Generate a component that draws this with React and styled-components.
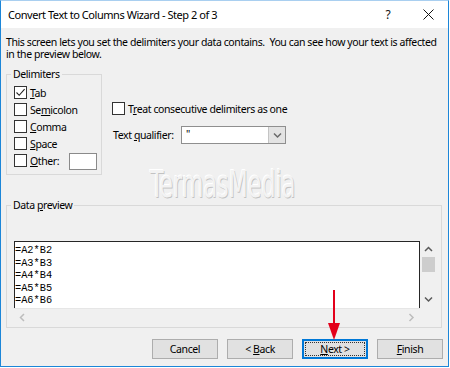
import React from 'react';
import styled, { createGlobalStyle } from 'styled-components';

const GlobalStyle = createGlobalStyle`
  html, body { margin: 0; padding: 0; background: #ffffff; }
  * { box-sizing: border-box; }
`;

const Window = styled.div`
  position: relative;
  width: 449px;
  height: 367px;
  border: 1px solid #1c86d8;
  border-top-color: #a9cff0;
  background: #f0f0f0;
  display: flex;
  flex-direction: column;
  font-family: "Noto Sans", "Open Sans", sans-serif;
  font-size: 10.5px;
  letter-spacing: -0.4px;
  color: #000;
  overflow: hidden;
`;

const TitleBar = styled.div`
  height: 27px;
  flex: none;
  background: #ffffff;
  display: flex;
  align-items: center;
  padding-left: 7px;
`;

const TitleText = styled.div`
  flex: 1;
  font-size: 11px;
  letter-spacing: -0.45px;
  color: #000;
`;

const CaptionButton = styled.div`
  width: 40px;
  height: 27px;
  display: flex;
  align-items: center;
  justify-content: center;
  font-size: 12px;
  letter-spacing: 0;
  color: #111;
`;

const Body = styled.div`
  flex: 1;
  display: flex;
  flex-direction: column;
  padding: 8px 5px 0 5px;
`;

const Description = styled.div`
  display: flex;
  flex-direction: column;
`;

const DescLine = styled.span`
  height: 12px;
  line-height: 12px;
  white-space: nowrap;
`;

const TopSection = styled.div`
  display: flex;
  gap: 10px;
  margin-top: 7px;
`;

const Group = styled.fieldset`
  margin: 0;
  padding: 0;
  min-width: 0;
  border: 1px solid #d9d9d9;
  width: ${(p) => p.$w}px;
  height: ${(p) => p.$h}px;
  margin-top: ${(p) => p.$mt || 0}px;
`;

const Legend = styled.legend`
  margin-left: 4px;
  padding: 0 2px;
  line-height: 14px;
`;

const CheckList = styled.div`
  display: flex;
  flex-direction: column;
  padding: 3px 4px 0 7px;
`;

const CheckRow = styled.div`
  height: 17px;
  display: flex;
  align-items: center;
`;

const Box = styled.span`
  width: 13px;
  height: 13px;
  flex: none;
  border: 1px solid #333;
  background: #fff;
  display: flex;
  align-items: center;
  justify-content: center;
`;

const Label = styled.span`
  margin-left: 3px;
  white-space: nowrap;
`;

const SmallInput = styled.span`
  margin-left: auto;
  width: 28px;
  height: 17px;
  margin-top: 2px;
  border: 1px solid #8a8a8a;
  background: #fff;
`;

const RightColumn = styled.div`
  display: flex;
  flex-direction: column;
  padding-top: 33px;
`;

const QualifierRow = styled.div`
  display: flex;
  align-items: center;
  margin-top: 9px;
`;

const FieldLabel = styled.span`
  width: 69px;
  padding-left: 1px;
  white-space: nowrap;
`;

const Select = styled.div`
  width: 105px;
  height: 18px;
  border: 1px solid #8f8f8f;
  background: #fff;
  display: flex;
`;

const SelectValue = styled.div`
  flex: 1;
  padding-left: 4px;
  line-height: 14px;
`;

const SelectButton = styled.div`
  width: 17px;
  background: #e3e3e3;
  border-left: 1px solid #c4c4c4;
  display: flex;
  align-items: center;
  justify-content: center;
`;

const Watermark = styled.div`
  position: absolute;
  left: 149px;
  top: 164px;
  font-family: "DejaVu Sans Condensed", "DejaVu Sans", sans-serif;
  font-size: 38px;
  line-height: 38px;
  letter-spacing: 0;
  color: #f3f3f3;
  transform: scaleX(0.65);
  transform-origin: left top;
  text-shadow: 1px 1px 0 #c2c2c2, -1px -1px 0 #ffffff;
  pointer-events: none;
`;

const PreviewInner = styled.div`
  padding: 29px 0 0 7px;
`;

const Preview = styled.div`
  width: 423px;
  height: 85px;
  display: grid;
  grid-template-columns: 406px 17px;
  grid-template-rows: 67px 17px;
`;

const DataArea = styled.div`
  background: #fff;
  border: 1px solid #262626;
  border-bottom: none;
  padding-top: 2px;
  font-family: "Liberation Mono", "Courier New", monospace;
  font-size: 10.3px;
  letter-spacing: 0;
  line-height: 12.5px;
  color: #000;
  overflow: hidden;
`;

const DataLine = styled.div`
  white-space: pre;
`;

const VScroll = styled.div`
  background: #f0f0f0;
  display: flex;
  flex-direction: column;
  align-items: center;
`;

const ArrowBox = styled.div`
  height: ${(p) => p.$h}px;
  width: 17px;
  flex: none;
  display: flex;
  align-items: center;
  justify-content: center;
`;

const Thumb = styled.div`
  width: 13px;
  height: 15px;
  background: #cdcdcd;
`;

const Spacer = styled.div`
  flex: 1;
`;

const HScroll = styled.div`
  background: #f0f0f0;
  display: flex;
  border-top: 1px solid #e6e6e6;
`;

const Corner = styled.div`
  background: #f0f0f0;
`;

const ButtonRow = styled.div`
  display: flex;
  justify-content: flex-end;
  gap: 9px;
  margin-top: 11px;
`;

const Button = styled.div`
  position: relative;
  width: 66px;
  height: 20px;
  background: #e1e1e1;
  border: 1px solid ${(p) => (p.$default ? '#0078d7' : '#adadad')};
  box-shadow: ${(p) => (p.$default ? 'inset 0 0 0 1px #0078d7' : 'none')};
  display: flex;
  align-items: center;
  justify-content: center;
  white-space: pre;
  &::after {
    content: '';
    display: ${(p) => (p.$default ? 'block' : 'none')};
    position: absolute;
    inset: 2px;
    border: 1px dotted #333;
  }
`;

const ArrowOverlay = styled.svg`
  position: absolute;
  left: 326px;
  top: 288px;
`;

const Chevron = ({ dir = 'down', color = '#5a5a5a' }) => {
  const paths = {
    down: 'M1 1.5 L4.5 5 L8 1.5',
    up: 'M1 5 L4.5 1.5 L8 5',
    left: 'M5 1 L1.5 4.5 L5 8',
    right: 'M1.5 1 L5 4.5 L1.5 8',
  };
  const vertical = dir === 'up' || dir === 'down';
  return (
    <svg width={vertical ? 9 : 7} height={vertical ? 7 : 9} viewBox={vertical ? '0 0 9 7' : '0 0 7 9'}>
      <path d={paths[dir]} fill="none" stroke={color} strokeWidth="1.5" />
    </svg>
  );
};

const Check = ({ checked }) => (
  <Box>
    {checked && (
      <svg width="11" height="11" viewBox="0 0 11 11">
        <path d="M1.5 5.5 L4.2 8.3 L9.6 2.2" fill="none" stroke="#222" strokeWidth="1.1" />
      </svg>
    )}
  </Box>
);

const delimiters = [
  { key: 'tab', pre: '', acc: 'T', post: 'ab', checked: true },
  { key: 'semi', pre: 'Se', acc: 'm', post: 'icolon' },
  { key: 'comma', pre: '', acc: 'C', post: 'omma' },
  { key: 'space', pre: '', acc: 'S', post: 'pace' },
];

const dataLines = ['=A2*B2', '=A3*B3', '=A4*B4', '=A5*B5', '=A6*B6'];

export default function App() {
  return (
    <>
      <GlobalStyle />
      <Window>
        <TitleBar>
          <TitleText>Convert Text to Columns Wizard - Step 2 of 3</TitleText>
          <CaptionButton>?</CaptionButton>
          <CaptionButton>
            <svg width="11" height="11" viewBox="0 0 11 11">
              <path d="M0.5 0.5 L10.5 10.5 M10.5 0.5 L0.5 10.5" stroke="#111" strokeWidth="1" />
            </svg>
          </CaptionButton>
        </TitleBar>
        <Body>
          <Description>
            <DescLine>
              This screen lets you set the delimiters your data contains.&nbsp; You can see how your text is affected
            </DescLine>
            <DescLine>in the preview below.</DescLine>
          </Description>
          <TopSection>
            <Group $w={96} $h={108}>
              <Legend>Delimiters</Legend>
              <CheckList>
                {delimiters.map((d) => (
                  <CheckRow key={d.key}>
                    <Check checked={d.checked} />
                    <Label>
                      {d.pre}
                      <u>{d.acc}</u>
                      {d.post}
                    </Label>
                  </CheckRow>
                ))}
                <CheckRow>
                  <Check />
                  <Label>
                    <u>O</u>ther:
                  </Label>
                  <SmallInput />
                </CheckRow>
              </CheckList>
            </Group>
            <RightColumn>
              <CheckRow>
                <Check />
                <Label>
                  T<u>r</u>eat consecutive delimiters as one
                </Label>
              </CheckRow>
              <QualifierRow>
                <FieldLabel>
                  Text <u>q</u>ualifier:
                </FieldLabel>
                <Select>
                  <SelectValue>"</SelectValue>
                  <SelectButton>
                    <Chevron dir="down" color="#6a6a6a" />
                  </SelectButton>
                </Select>
              </QualifierRow>
            </RightColumn>
          </TopSection>
          <Group $w={436} $h={130} $mt={23}>
            <Legend>
              Data <u>p</u>review
            </Legend>
            <PreviewInner>
              <Preview>
                <DataArea>
                  {dataLines.map((l) => (
                    <DataLine key={l}>{l}</DataLine>
                  ))}
                </DataArea>
                <VScroll>
                  <ArrowBox $h={16}>
                    <Chevron dir="up" />
                  </ArrowBox>
                  <Thumb />
                  <Spacer />
                  <ArrowBox $h={17}>
                    <Chevron dir="down" />
                  </ArrowBox>
                </VScroll>
                <HScroll>
                  <ArrowBox $h={16}>
                    <Chevron dir="left" color="#bdbdbd" />
                  </ArrowBox>
                  <Spacer />
                  <ArrowBox $h={16}>
                    <Chevron dir="right" color="#bdbdbd" />
                  </ArrowBox>
                </HScroll>
                <Corner />
              </Preview>
            </PreviewInner>
          </Group>
          <ButtonRow>
            <Button>Cancel</Button>
            <Button>
              {'< '}
              <u>B</u>ack
            </Button>
            <Button $default>
              <u>N</u>
              {'ext >'}
            </Button>
            <Button>
              <u>F</u>inish
            </Button>
          </ButtonRow>
        </Body>
        <Watermark>TermasMedia</Watermark>
        <ArrowOverlay width="14" height="52" viewBox="0 0 14 52">
          <rect x="6" y="1" width="2" height="36" fill="#e3001b" />
          <polygon points="1,34 13,34 7,51" fill="#e3001b" />
        </ArrowOverlay>
      </Window>
    </>
  );
}
